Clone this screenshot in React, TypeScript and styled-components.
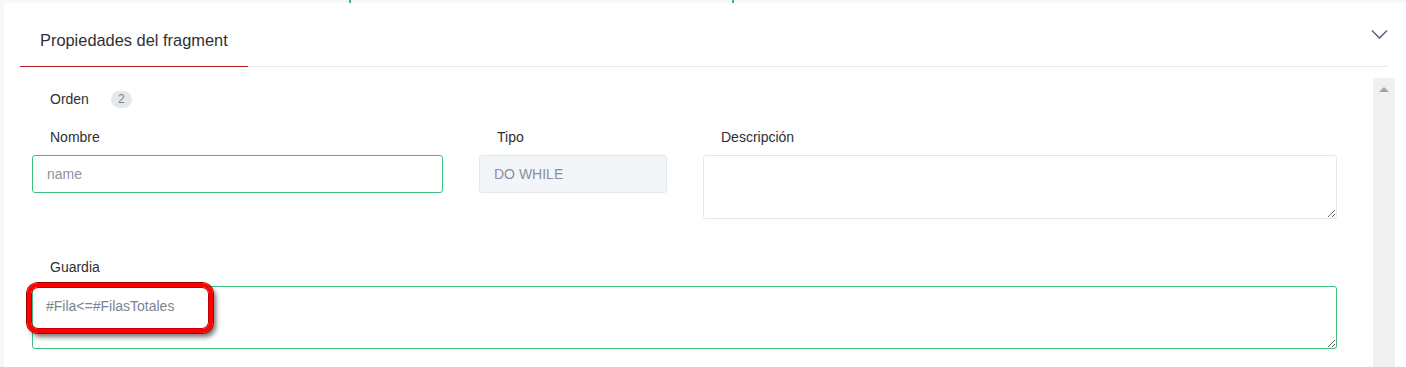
import styled, { createGlobalStyle } from "styled-components";

const GlobalStyle = createGlobalStyle`
  html, body {
    margin: 0;
    padding: 0;
    background: #f7f7f7;
    font-family: "Liberation Sans", Arial, sans-serif;
    color: #333;
  }
  * {
    box-sizing: border-box;
  }
`;

const Page = styled.div`
  height: 367px;
  overflow: hidden;
  display: flex;
  flex-direction: column;
`;

const TopStrip = styled.div`
  height: 3px;
  display: flex;
`;

const Tick = styled.span<{ $left: number }>`
  width: 2px;
  height: 3px;
  margin-left: ${(p) => p.$left}px;
  background: #3fb87c;
`;

const Card = styled.div`
  flex: 1;
  margin-left: 4px;
  background: #fff;
  display: flex;
  flex-direction: column;
`;

const Header = styled.div`
  margin: 0 18px 0 16px;
  display: flex;
  justify-content: space-between;
  align-items: flex-start;
  border-bottom: 1px solid #e3ebea;
`;

const Tab = styled.div`
  padding: 27px 20px 16px;
  font-size: 16.4px;
  line-height: 20px;
  color: #2f2f33;
  border-bottom: 1px solid #b71c1c;
  margin-bottom: -1px;
`;

const Chevron = styled.svg`
  margin-top: 26px;
`;

const Body = styled.div`
  flex: 1;
  display: flex;
`;

const Content = styled.div`
  flex: 1;
  padding: 22px 36px 0 28px;
`;

const Scrollbar = styled.div`
  width: 22px;
  margin: 11px 11px 0 0;
  background: #f0f0f0;
  display: flex;
  justify-content: center;
  padding-top: 9px;
`;

const ArrowUp = styled.span`
  width: 0;
  height: 0;
  border-left: 5px solid transparent;
  border-right: 5px solid transparent;
  border-bottom: 5px solid #a3a3a3;
`;

const OrderRow = styled.div`
  display: flex;
  align-items: center;
  gap: 22px;
  padding-left: 18px;
  height: 20px;
`;

const Label = styled.label<{ $inline?: boolean; $gap?: number }>`
  display: block;
  font-size: 14px;
  line-height: 20px;
  color: #2f2f33;
  padding-left: ${(p) => (p.$inline ? 0 : 18)}px;
  margin-bottom: ${(p) => (p.$inline ? 0 : p.$gap ?? 8)}px;
`;

const Badge = styled.span`
  display: inline-flex;
  align-items: center;
  justify-content: center;
  width: 21px;
  height: 17px;
  border-radius: 9px;
  background: #e5e8eb;
  color: #7e8299;
  font-size: 12px;
`;

const FieldGrid = styled.div`
  margin-top: 18px;
  display: grid;
  grid-template-columns: 411px 188px 1fr;
  column-gap: 36px;
  align-items: start;
`;

const Field = styled.div`
  display: flex;
  flex-direction: column;
`;

const Input = styled.input<{ $accent?: boolean }>`
  height: 38px;
  width: 100%;
  border: 1px solid ${(p) => (p.$accent ? "#40be82" : "#e4e6ea")};
  border-radius: 3px;
  padding: 0 14px;
  font-family: "Liberation Sans", Arial, sans-serif;
  font-size: 14px;
  color: #6f7785;
  background: #fff;
  outline: none;

  &::placeholder {
    color: #8a93a3;
  }

  &[readonly] {
    background: #f3f6f9;
    color: #8a8f99;
  }
`;

const TextArea = styled.textarea<{ $accent?: boolean; $height: number }>`
  display: block;
  width: 100%;
  height: ${(p) => p.$height}px;
  border: 1px solid ${(p) => (p.$accent ? "#40be82" : "#e4e6ea")};
  border-radius: 3px;
  padding: 9px 13px;
  font-family: "Liberation Sans", Arial, sans-serif;
  font-size: 14px;
  line-height: 20px;
  color: #7b8494;
  background: #fff;
  outline: none;
  resize: vertical;
`;

const GuardField = styled.div`
  margin-top: 38px;
`;

const GuardBox = styled.div`
  position: relative;
`;

const Highlight = styled.div`
  position: absolute;
  left: -5px;
  top: -3px;
  width: 186px;
  height: 50px;
  border: 4px solid #ff0000;
  border-radius: 11px;
  box-shadow: 0 0 0 1px #a30000, inset 0 0 0 1px #c00000,
    3px 4px 5px rgba(0, 0, 0, 0.55);
  pointer-events: none;
`;

export default function App() {
  return (
    <>
      <GlobalStyle />
      <Page>
        <TopStrip>
          <Tick $left={349} />
          <Tick $left={381} />
        </TopStrip>
        <Card>
          <Header>
            <Tab>Propiedades del fragment</Tab>
            <Chevron width="17" height="11" viewBox="0 0 17 11">
              <path
                d="M1 1.5 L8.5 9 L16 1.5"
                fill="none"
                stroke="#5a6b7d"
                strokeWidth="1.6"
              />
            </Chevron>
          </Header>
          <Body>
            <Content>
              <OrderRow>
                <Label as="span" $inline>
                  Orden
                </Label>
                <Badge>2</Badge>
              </OrderRow>
              <FieldGrid>
                <Field>
                  <Label>Nombre</Label>
                  <Input $accent placeholder="name" />
                </Field>
                <Field>
                  <Label>Tipo</Label>
                  <Input readOnly value="DO WHILE" />
                </Field>
                <Field>
                  <Label>Descripción</Label>
                  <TextArea $height={64} />
                </Field>
              </FieldGrid>
              <GuardField>
                <Label $gap={9}>Guardia</Label>
                <GuardBox>
                  <TextArea $accent $height={63} defaultValue="#Fila<=#FilasTotales" />
                  <Highlight />
                </GuardBox>
              </GuardField>
            </Content>
            <Scrollbar>
              <ArrowUp />
            </Scrollbar>
          </Body>
        </Card>
      </Page>
    </>
  );
}
